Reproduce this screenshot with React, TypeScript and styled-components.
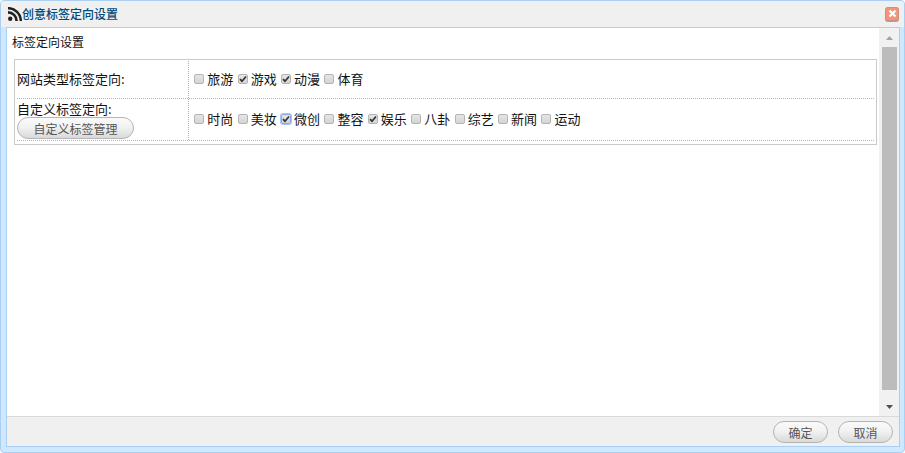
import React from "react";
import styled, { createGlobalStyle } from "styled-components";

const cjk = `"Noto Sans CJK SC", "Liberation Sans", sans-serif`;

const GlobalStyle = createGlobalStyle`
  html, body {
    margin: 0;
    padding: 0;
    background: #fff;
  }
  #root {
    width: 905px;
    height: 453px;
  }
`;

const Dialog = styled.div`
  box-sizing: border-box;
  width: 905px;
  height: 453px;
  display: flex;
  flex-direction: column;
  background: #cfe8fd;
  border: 1px solid #a9cff2;
  border-radius: 4px;
  padding: 0 4px 5px 5px;
  font-family: ${cjk};
  font-size: 12px;
  color: #111;
`;

const TitleBar = styled.div`
  flex: 0 0 26px;
  margin: 0 -4px 0 -5px;
  padding: 0 5px 0 7px;
  display: flex;
  align-items: center;
  justify-content: space-between;
  background: #f0f0f0;
  border-radius: 3px 3px 0 0;
`;

const Title = styled.div`
  display: flex;
  align-items: center;
  color: #004a7c;
  font-size: 12px;
  line-height: 16px;
  font-weight: 500;
`;

const CloseButton = styled.div`
  box-sizing: border-box;
  width: 14px;
  height: 15px;
  display: flex;
  align-items: center;
  justify-content: center;
  background: #f8917a;
  border: 1px solid #c4928a;
  border-bottom-width: 2px;
  border-radius: 3px;
`;

const Frame = styled.div`
  flex: 1;
  min-height: 0;
  display: flex;
  flex-direction: column;
  background: #fff;
  border: 1px solid #a9cff2;
`;

const Body = styled.div`
  flex: 1;
  min-height: 0;
  display: flex;
`;

const Content = styled.div`
  flex: 1;
  min-width: 0;
  padding: 6px 3px 0 5px;
`;

const SectionTitle = styled.div`
  font-size: 12px;
  line-height: 16px;
  margin-bottom: 9px;
`;

const TagTable = styled.div`
  box-sizing: border-box;
  margin-left: 2px;
  width: 863px;
  height: 86px;
  padding: 1px 2px 3px 2px;
  border: 1px solid #cacaca;
`;

const Row = styled.div<{ $height: number }>`
  display: flex;
  box-sizing: border-box;
  height: ${(p) => p.$height}px;
  border-bottom: 1px dotted #b4b4b4;
`;

const LabelCell = styled.div<{ $lift?: number }>`
  box-sizing: border-box;
  flex: 0 0 172px;
  display: flex;
  flex-direction: column;
  justify-content: center;
  align-items: flex-start;
  padding-bottom: ${(p) => p.$lift ?? 0}px;
  border-right: 1px dotted #b4b4b4;
  font-size: 13px;
  line-height: 17px;
`;

const OptionCell = styled.div`
  flex: 1;
  display: flex;
  align-items: center;
  padding: 0 0 2px 5.3px;
  gap: 4.375px;
`;

const Option = styled.label`
  display: flex;
  align-items: center;
  gap: 3px;
  font-size: 13px;
  line-height: 17px;
`;

const Box = styled.span<{ $focused?: boolean }>`
  box-sizing: border-box;
  width: 10px;
  height: 10px;
  display: flex;
  align-items: center;
  justify-content: center;
  border: 1px solid ${(p) => (p.$focused ? "#8aa8e8" : "#b4b4b4")};
  border-radius: 2px;
  background: linear-gradient(#e6e6e6, #d4d4d4);
  box-shadow: ${(p) => (p.$focused ? "0 0 0 1px #a9c4f5" : "none")};
`;

const PillButton = styled.div<{ $width: number }>`
  box-sizing: border-box;
  width: ${(p) => p.$width}px;
  height: 22px;
  display: flex;
  align-items: center;
  justify-content: center;
  border: 1px solid #b5b5b5;
  border-radius: 11px;
  background: linear-gradient(#fafafa 0%, #f2f2f2 45%, #d9d9d9 100%);
  color: #555;
  font-size: 12px;
`;

const Scrollbar = styled.div`
  flex: 0 0 20px;
  display: flex;
  flex-direction: column;
  align-items: center;
  background: #f1f1f1;
`;

const ArrowSlot = styled.div<{ $height: number; $top: number }>`
  flex: 0 0 ${(p) => p.$height}px;
  box-sizing: border-box;
  padding-top: ${(p) => p.$top}px;
  display: flex;
  justify-content: center;
`;

const Thumb = styled.div`
  flex: 1;
  width: 15px;
  background: #bcbcbc;
`;

const Footer = styled.div`
  box-sizing: border-box;
  flex: 0 0 30px;
  display: flex;
  align-items: center;
  justify-content: flex-end;
  gap: 10px;
  padding: 1px 6px 0 0;
  background: #f0f0f0;
  border-top: 1px solid #d9d9d9;
`;

const siteTags: [string, boolean][] = [
  ["旅游", false],
  ["游戏", true],
  ["动漫", true],
  ["体育", false],
];

const customTags: [string, boolean][] = [
  ["时尚", false],
  ["美妆", false],
  ["微创", true],
  ["整容", false],
  ["娱乐", true],
  ["八卦", false],
  ["综艺", false],
  ["新闻", false],
  ["运动", false],
];

const TagOption = ({ name, checked, focused }: { name: string; checked: boolean; focused?: boolean }) => (
  <Option>
    <Box $focused={focused}>
      {checked && (
        <svg width="8" height="8" viewBox="0 0 8 8">
          <path d="M1 4.2 L3 6.2 L7 1.5" fill="none" stroke="#333" strokeWidth="1.7" />
        </svg>
      )}
    </Box>
    {name}
  </Option>
);

const RssIcon = () => (
  <svg width="14" height="14" viewBox="0 0 14 14">
    <circle cx="2.2" cy="11.8" r="2.2" fill="#222" />
    <path d="M0 5.4 A8.6 8.6 0 0 1 8.6 14" fill="none" stroke="#222" strokeWidth="2.6" />
    <path d="M0 1.2 A12.8 12.8 0 0 1 12.8 14" fill="none" stroke="#222" strokeWidth="2.6" />
  </svg>
);

const App = () => (
  <>
    <GlobalStyle />
    <Dialog>
      <TitleBar>
        <Title>
          <RssIcon />
          创意标签定向设置
        </Title>
        <CloseButton>
          <svg width="9" height="9" viewBox="0 0 9 9">
            <path d="M1.5 1.5 L7.5 7.5 M7.5 1.5 L1.5 7.5" stroke="#fff" strokeWidth="2.2" />
          </svg>
        </CloseButton>
      </TitleBar>
      <Frame>
        <Body>
          <Content>
            <SectionTitle>标签定向设置</SectionTitle>
            <TagTable>
              <Row $height={38}>
                <LabelCell $lift={2}>网站类型标签定向:</LabelCell>
                <OptionCell>
                  {siteTags.map(([name, checked]) => (
                    <TagOption key={name} name={name} checked={checked} />
                  ))}
                </OptionCell>
              </Row>
              <Row $height={42}>
                <LabelCell>
                  自定义标签定向:
                  <PillButton $width={117}>自定义标签管理</PillButton>
                </LabelCell>
                <OptionCell>
                  {customTags.map(([name, checked]) => (
                    <TagOption key={name} name={name} checked={checked} focused={name === "微创"} />
                  ))}
                </OptionCell>
              </Row>
            </TagTable>
          </Content>
          <Scrollbar>
            <ArrowSlot $height={19} $top={8}>
              <svg width="7" height="4" viewBox="0 0 7 4">
                <path d="M3.5 0 L7 4 L0 4 Z" fill="#a3a3a3" />
              </svg>
            </ArrowSlot>
            <Thumb />
            <ArrowSlot $height={26} $top={15}>
              <svg width="7" height="4" viewBox="0 0 7 4">
                <path d="M0 0 L7 0 L3.5 4 Z" fill="#505050" />
              </svg>
            </ArrowSlot>
          </Scrollbar>
        </Body>
        <Footer>
          <PillButton $width={55}>确定</PillButton>
          <PillButton $width={55}>取消</PillButton>
        </Footer>
      </Frame>
    </Dialog>
  </>
);

export default App;
